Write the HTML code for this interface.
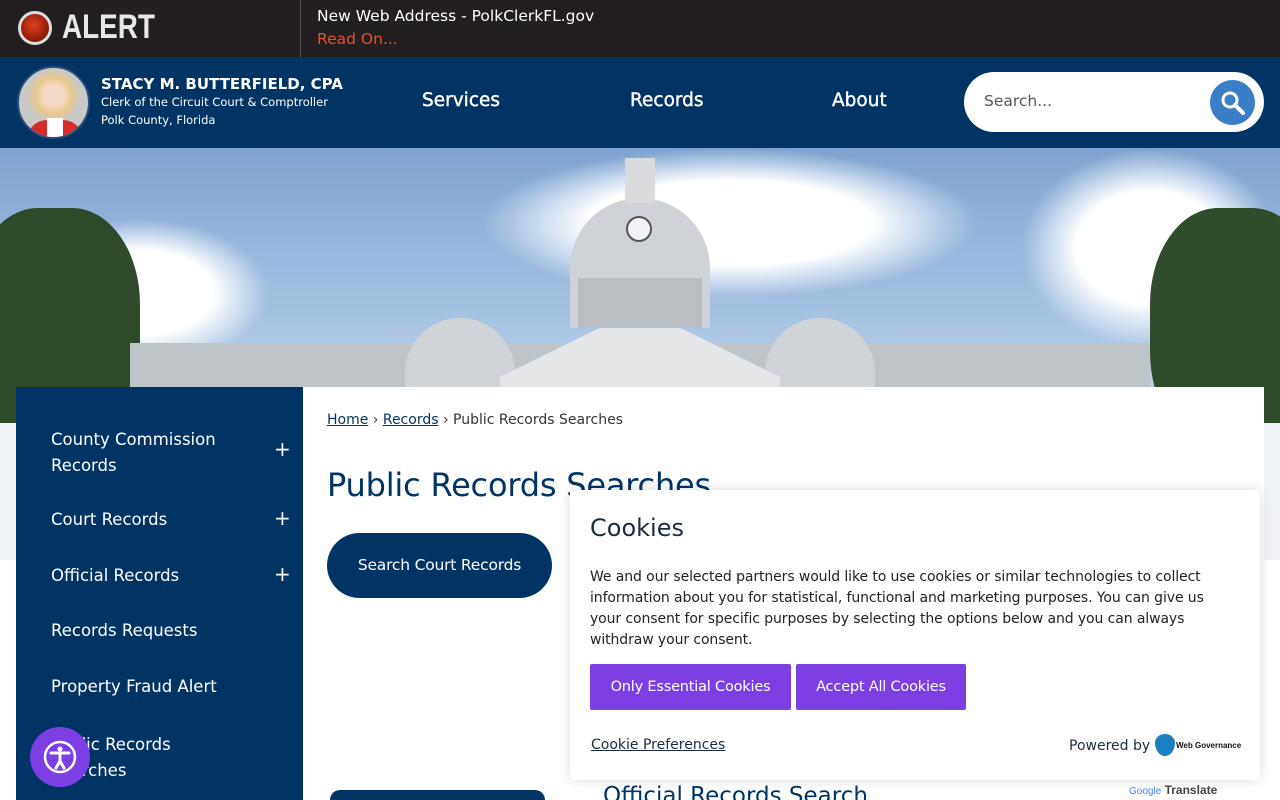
<!DOCTYPE html>
<html><head><meta charset="utf-8"><style>
*{margin:0;padding:0;box-sizing:border-box}
html,body{width:1280px;height:800px;overflow:hidden}
body{position:relative;font-family:"DejaVu Sans","Liberation Sans",sans-serif;background:#fff}
#w{position:absolute;left:0;top:0;width:1280px;height:800px;overflow:hidden}
.abs{position:absolute}
</style></head><body><div id="w">
<div class="abs" style="left:0;top:0;width:1280px;height:57px;background:#231f20"></div>
<div class="abs" style="left:18px;top:11px;width:34px;height:34px;border-radius:50%;background:radial-gradient(circle at 45% 40%,#e04020,#8a1a08 70%);border:3px solid #ddd"></div>
<div class="abs" style="left:62px;top:8px;color:#e8e8e8;font:bold 34px 'Liberation Sans',sans-serif;transform:scaleX(.82);transform-origin:left">ALERT</div>
<div class="abs" style="left:300px;top:0;width:1px;height:57px;background:#555"></div>
<div class="abs" style="left:317px;top:7px;color:#fff;font-size:15.5px">New Web Address - PolkClerkFL.gov</div>
<div class="abs" style="left:317px;top:30px;color:#e4512f;font-size:15.5px">Read On...</div>
<div class="abs" style="left:0;top:57px;width:1280px;height:91px;background:#003464"></div>
<div class="abs" style="left:17px;top:66px;width:73px;height:73px;border-radius:50%;background:radial-gradient(circle at 50% 40%,#f3d8c4 20%,#e8c88a 34%,#c9c9c9 50%);border:2px solid #2a4f7a;overflow:hidden"><div style="position:absolute;left:8px;top:52px;width:56px;height:24px;background:#d62b2b;border-radius:20px 20px 0 0"></div><div style="position:absolute;left:28px;top:50px;width:16px;height:22px;background:#fff"></div></div>
<div class="abs" style="left:101px;top:75px;color:#fff;font-weight:bold;font-size:15px">STACY M. BUTTERFIELD, CPA</div>
<div class="abs" style="left:101px;top:95px;color:#fff;font-size:11.5px">Clerk of the Circuit Court &amp; Comptroller</div>
<div class="abs" style="left:101px;top:113px;color:#fff;font-size:11.5px">Polk County, Florida</div>
<div class="abs" style="left:422px;top:90px;color:#fff;font-size:18.5px;-webkit-text-stroke:.4px #fff">Services</div>
<div class="abs" style="left:630px;top:90px;color:#fff;font-size:18.5px;-webkit-text-stroke:.4px #fff">Records</div>
<div class="abs" style="left:832px;top:90px;color:#fff;font-size:18.5px;-webkit-text-stroke:.4px #fff">About</div>
<div class="abs" style="left:964px;top:72px;width:300px;height:60px;background:#fff;border-radius:30px"></div>
<div class="abs" style="left:984px;top:92px;color:#555;font-size:15.5px">Search...</div>
<div class="abs" style="left:1210px;top:80px;width:45px;height:45px;border-radius:50%;background:#3b7ec8"></div>
<svg class="abs" style="left:1218px;top:88px" width="30" height="30" viewBox="0 0 30 30"><circle cx="12" cy="12" r="7" fill="none" stroke="#fff" stroke-width="3"/><path d="M17 17l8 8" stroke="#fff" stroke-width="4" stroke-linecap="round"/></svg>
<div class="abs" style="left:0;top:148px;width:1280px;height:275px;background:linear-gradient(180deg,#7fa3d1,#a6c2e2 60%,#c8d8ea);overflow:hidden">
<div class="abs" style="left:480px;top:0;width:500px;height:150px;border-radius:50%;background:radial-gradient(#fff 40%,rgba(255,255,255,0) 70%)"></div>
<div class="abs" style="left:1020px;top:0;width:260px;height:200px;border-radius:50%;background:radial-gradient(#fff 40%,rgba(255,255,255,0) 70%)"></div>
<div class="abs" style="left:10px;top:70px;width:260px;height:150px;border-radius:50%;background:radial-gradient(#fff 40%,rgba(255,255,255,0) 70%)"></div>
<div class="abs" style="left:-30px;top:60px;width:170px;height:240px;border-radius:40%;background:#2e4a2a"></div>
<div class="abs" style="left:1150px;top:60px;width:170px;height:240px;border-radius:40%;background:#2f4d2c"></div>
<div class="abs" style="left:130px;top:195px;width:1020px;height:80px;background:#bfc4c8"></div>
<div class="abs" style="left:405px;top:170px;width:110px;height:70px;border-radius:55px 55px 0 0;background:#d0d4d8"></div>
<div class="abs" style="left:765px;top:170px;width:110px;height:70px;border-radius:55px 55px 0 0;background:#d0d4d8"></div>
<div class="abs" style="left:500px;top:160px;width:280px;height:115px;background:#e4e6e8;clip-path:polygon(50% 0,100% 60%,100% 100%,0 100%,0 60%)"></div>
<div class="abs" style="left:570px;top:50px;width:140px;height:130px;border-radius:70px 70px 0 0;background:#cfd3d7"></div>
<div class="abs" style="left:578px;top:130px;width:124px;height:50px;background:#b9bec3"></div>
<div class="abs" style="left:625px;top:10px;width:30px;height:45px;background:#d8dadc"></div>
<div class="abs" style="left:626px;top:68px;width:26px;height:26px;border-radius:50%;background:#f3f3f3;border:2px solid #555"></div>
</div>
<div class="abs" style="left:0;top:423px;width:1280px;height:137px;background:#f0f3f7"></div>
<div class="abs" style="left:16px;top:387px;width:287px;height:413px;background:#003464;color:#fff;font-size:16.5px">
<div class="abs" style="left:35px;top:40px;line-height:26px">County Commission<br>Records</div><div class="abs" style="left:258px;top:50px;font-size:20px">+</div>
<div class="abs" style="left:35px;top:123px">Court Records</div><div class="abs" style="left:258px;top:119px;font-size:20px">+</div>
<div class="abs" style="left:35px;top:179px">Official Records</div><div class="abs" style="left:258px;top:175px;font-size:20px">+</div>
<div class="abs" style="left:35px;top:234px">Records Requests</div>
<div class="abs" style="left:35px;top:290px">Property Fraud Alert</div>
<div class="abs" style="left:35px;top:345px;line-height:26px">Public Records<br>Searches</div>
</div>
<div class="abs" style="left:303px;top:387px;width:961px;height:413px;background:#fff"></div>
<div class="abs" style="left:327px;top:412px;font-size:14px;color:#333"><u style="color:#003464">Home</u> › <u style="color:#003464">Records</u> › Public Records Searches</div>
<div class="abs" style="left:327px;top:466px;font-size:32px;color:#003464;letter-spacing:-.2px">Public Records Searches</div>
<div class="abs" style="left:327px;top:533px;width:225px;height:65px;border-radius:33px;background:#003464;color:#fff;font-size:15.5px;text-align:center;line-height:65px;letter-spacing:-.2px">Search Court Records</div>
<div class="abs" style="left:330px;top:790px;width:215px;height:10px;border-radius:30px 30px 0 0;background:#003464"></div>
<div class="abs" style="left:603px;top:783px;font-size:23px;color:#003464">Official Records Search</div>
<div class="abs" style="left:570px;top:490px;width:690px;height:290px;background:#fff;box-shadow:0 0 12px rgba(0,0,0,.15);border-radius:4px"></div>
<div class="abs" style="left:590px;top:514px;font-size:24px;color:#1c2b3e">Cookies</div>
<div class="abs" style="left:590px;top:567px;width:635px;font-size:14px;line-height:21px;color:#222;letter-spacing:-.1px">We and our selected partners would like to use cookies or similar technologies to collect information about you for statistical, functional and marketing purposes. You can give us your consent for specific purposes by selecting the options below and you can always withdraw your consent.</div>
<div class="abs" style="left:590px;top:664px;width:201px;height:46px;background:#7b3fe4;color:#fff;font-size:14.5px;text-align:center;line-height:46px;border-radius:2px;letter-spacing:-.2px">Only Essential Cookies</div>
<div class="abs" style="left:796px;top:664px;width:170px;height:46px;background:#7b3fe4;color:#fff;font-size:14.5px;text-align:center;line-height:46px;border-radius:2px;letter-spacing:-.2px">Accept All Cookies</div>
<div class="abs" style="left:591px;top:737px;font-size:14px;color:#1c2b3e;text-decoration:underline">Cookie Preferences</div>
<div class="abs" style="left:1069px;top:738px;font-size:14px;color:#1c2b3e">Powered by</div>
<div class="abs" style="left:1155px;top:734px;width:20px;height:22px;border-radius:50% 50% 50% 50%/40% 40% 60% 60%;background:#1a7fc1"></div>
<div class="abs" style="left:1176px;top:741px;font:bold 8px 'Liberation Sans',sans-serif;color:#111">Web Governance</div>
<div class="abs" style="left:1129px;top:783px;font:12px 'Liberation Sans',sans-serif;color:#444"><span style="font-size:10px;color:#4285f4">Google</span> <b>Translate</b></div>
<div class="abs" style="left:30px;top:727px;width:60px;height:60px;border-radius:50%;background:#7b3fe4"></div>
<svg class="abs" style="left:42px;top:739px" width="36" height="36" viewBox="0 0 36 36"><circle cx="18" cy="18" r="15" fill="none" stroke="#fff" stroke-width="2.5"/><circle cx="18" cy="10" r="2.5" fill="#fff"/><path d="M9 14h18M18 14v8M18 22l-4 7M18 22l4 7" stroke="#fff" stroke-width="3" stroke-linecap="round"/></svg>
</div></body></html>
